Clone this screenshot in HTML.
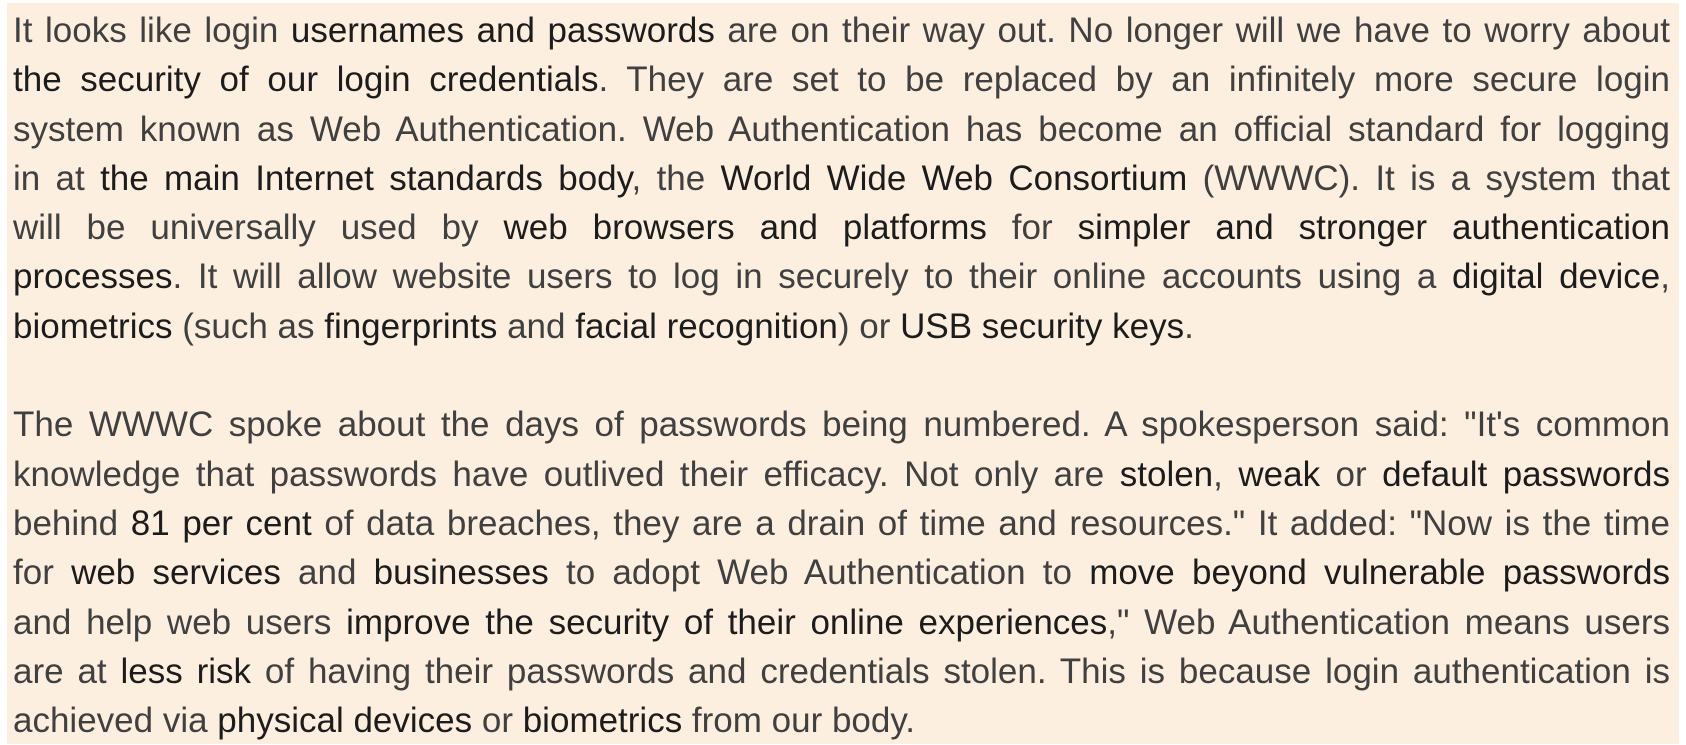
<!DOCTYPE html>
<html><head><meta charset="utf-8"><style>
html,body{margin:0;padding:0;background:#fff;width:1686px;height:744px;overflow:hidden}
.box{position:absolute;left:7px;top:3px;width:1672px;height:741px;background:#fdefe0;box-sizing:border-box;padding:3px 9px 0 6px;font-family:"Liberation Sans",sans-serif;font-size:35px;color:#404040}
.l{height:49.3px;line-height:49.3px;white-space:nowrap;text-align:justify;text-align-last:justify}
.l.e{text-align-last:left}
b{font-weight:normal;color:#1c1c1c}
</style></head><body><div class="box">
<div class="l">It looks like login <b>usernames and passwords</b> are on their way out. No longer will we have to worry about</div>
<div class="l"><b>the security of our login credentials</b>. They are set to be replaced by an infinitely more secure login</div>
<div class="l">system known as Web Authentication. Web Authentication has become an official standard for logging</div>
<div class="l">in at <b>the main Internet standards body</b>, the <b>World Wide Web Consortium</b> (WWWC). It is a system that</div>
<div class="l">will be universally used by <b>web browsers and platforms</b> for <b>simpler and stronger authentication</b></div>
<div class="l"><b>processes</b>. It will allow website users to log in securely to their online accounts using a <b>digital device</b>,</div>
<div class="l e"><b>biometrics</b> (such as <b>fingerprints</b> and <b>facial recognition</b>) or <b>USB security keys</b>.</div>
<div class="l e">&nbsp;</div>
<div class="l">The WWWC spoke about the days of passwords being numbered. A spokesperson said: "It's common</div>
<div class="l">knowledge that passwords have outlived their efficacy. Not only are <b>stolen</b>, <b>weak</b> or <b>default passwords</b></div>
<div class="l">behind <b>81 per cent</b> of data breaches, they are a drain of time and resources." It added: "Now is the time</div>
<div class="l">for <b>web services</b> and <b>businesses</b> to adopt Web Authentication to <b>move beyond vulnerable passwords</b></div>
<div class="l">and help web users <b>improve the security of their online experiences</b>," Web Authentication means users</div>
<div class="l">are at <b>less risk</b> of having their passwords and credentials stolen. This is because login authentication is</div>
<div class="l e">achieved via <b>physical devices</b> or <b>biometrics</b> from our body.</div>
</div></body></html>
